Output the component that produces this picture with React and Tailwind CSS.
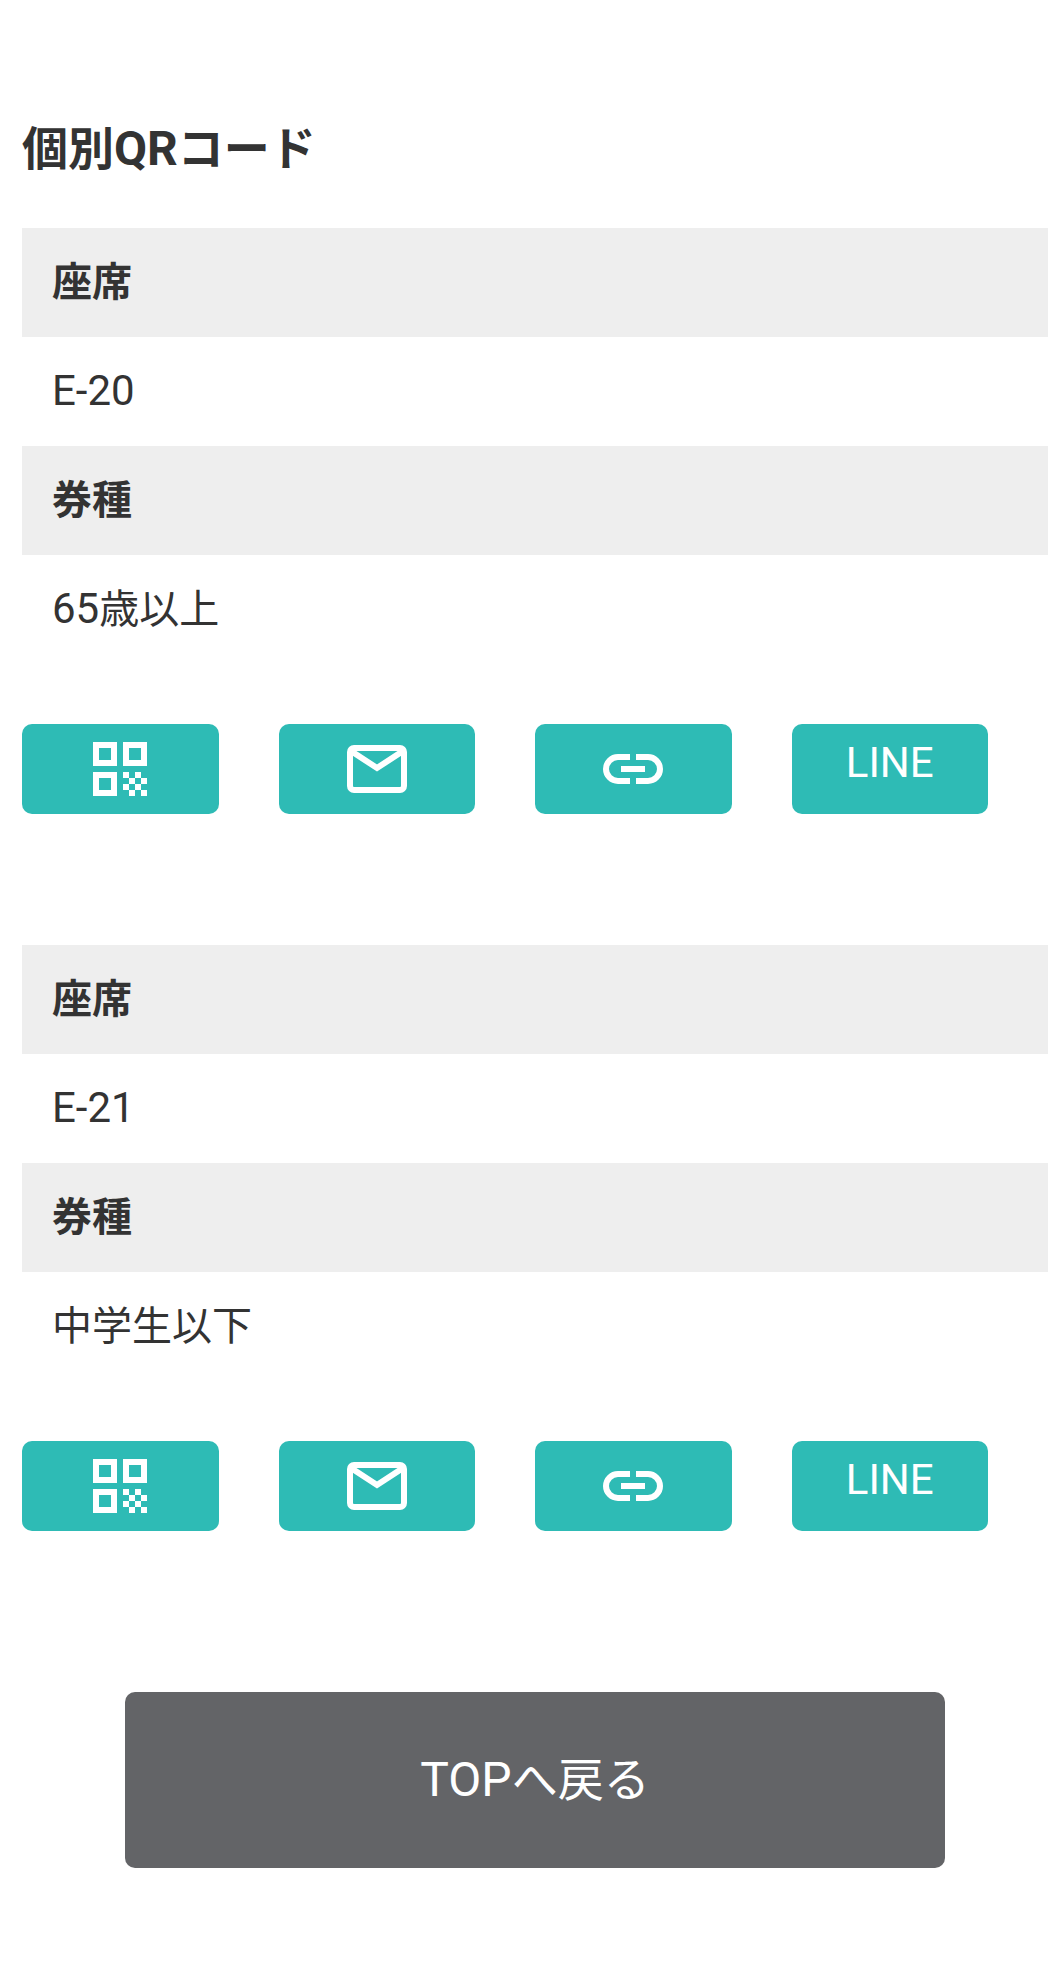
import React from "react";

const tickets = [
  { seat: "E-20", age: "65", type: "歳以上" },
  { seat: "E-21", age: "", type: "中学生以下" },
];

function QrIcon() {
  return (
    <svg width="54" height="54" viewBox="0 0 54 54" fill="#fff">
      <path fillRule="evenodd" d="M0 0h24v24H0zM6 6v12h12V6zM30 0h24v24H30zM36 6v12h12V6zM0 30h24v24H0zM6 36v12h12V36z" />
      <path d="M30 30h6v6h-6zM42 30h6v6h-6zM36 36h6v6h-6zM48 36h6v6h-6zM30 42h6v6h-6zM42 42h6v6h-6zM36 48h6v6h-6zM48 48h6v6h-6z" />
    </svg>
  );
}

function MailIcon() {
  return (
    <svg width="60" height="48" viewBox="0 0 60 48" fill="none" stroke="#fff" strokeWidth="6">
      <rect x="3" y="3" width="54" height="42" rx="4" />
      <path d="M4 6l26 17L56 6" />
    </svg>
  );
}

function LinkIcon() {
  return (
    <svg width="60" height="30" viewBox="0 0 60 30" fill="none" stroke="#fff" strokeWidth="6">
      <path d="M27 3H15a12 12 0 0 0 0 24h12" />
      <path d="M33 3h12a12 12 0 0 1 0 24H33" />
      <path d="M18 15h24" />
    </svg>
  );
}

function Ticket({ seat, age, type }) {
  return (
    <div className="mb-[131px]">
      <div className="bg-[#eeeeee] h-[109px] flex items-center px-[30px] text-[40px] font-bold">座席</div>
      <div className="h-[109px] flex items-center px-[30px] pb-[2px] text-[42px]">{seat}</div>
      <div className="bg-[#eeeeee] h-[109px] flex items-center px-[30px] text-[40px] font-bold">券種</div>
      <div className="h-[109px] flex items-center px-[30px] pb-[2px] text-[40px]">
        <p>
          <span className="text-[42px]">{age}</span>
          {type}
        </p>
      </div>
      <div className="flex gap-[60px] mt-[60px]">
        <a className="w-[196.5px] h-[90px] rounded-[10px] bg-[#2ebbb5] flex items-center justify-center"><QrIcon /></a>
        <a className="w-[196.5px] h-[90px] rounded-[10px] bg-[#2ebbb5] flex items-center justify-center"><MailIcon /></a>
        <a className="w-[196.5px] h-[90px] rounded-[10px] bg-[#2ebbb5] flex items-center justify-center"><LinkIcon /></a>
        <a className="w-[196.5px] h-[90px] rounded-[10px] bg-[#2ebbb5] flex items-center justify-center pb-[14px] text-[42px] text-white">LINE</a>
      </div>
    </div>
  );
}

export default function App() {
  return (
    <div className="min-h-[1975px] bg-white pl-[22px] pr-[16px] pt-[120px] text-[#333333] font-['Roboto','Noto_Sans_CJK_JP',sans-serif]">
      <h2 className="h-[68px] leading-[58px] text-[46px] font-bold mb-[40px]">
        個別<span className="text-[48px]">QR</span>コード
      </h2>
      {tickets.map((t) => (
        <Ticket key={t.seat} seat={t.seat} age={t.age} type={t.type} />
      ))}
      <a className="mx-auto mt-[161px] w-[820px] h-[176px] rounded-[10px] bg-[#636467] flex items-center justify-center text-[46px] text-white">
        <p>
          <span className="text-[48px]">TOP</span>へ戻る
        </p>
      </a>
    </div>
  );
}
